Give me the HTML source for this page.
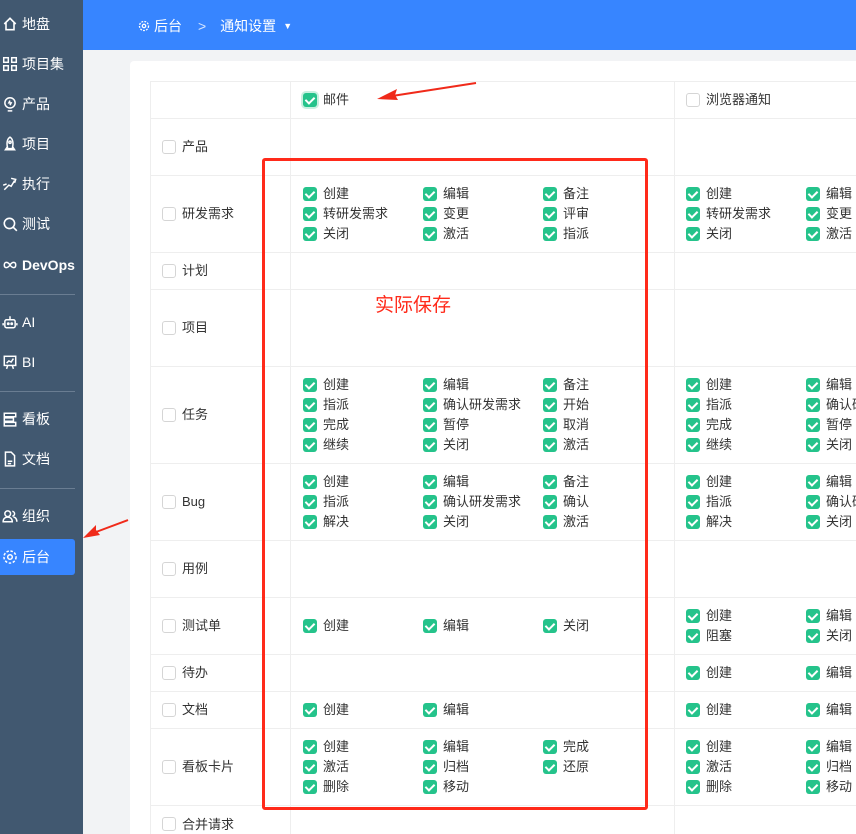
<!DOCTYPE html>
<html style="overflow:hidden;width:856px;height:834px"><head><meta charset="utf-8"><style>
*{box-sizing:border-box;margin:0;padding:0}
body{width:856px;height:834px;overflow:hidden;background:#f2f3f5;font-family:"Liberation Sans","Noto Sans CJK SC",sans-serif;font-size:13px;color:#333;position:relative}
#side{position:absolute;left:0;top:0;width:83px;height:834px;background:#415870;color:#fff;font-size:14px}
.si{position:absolute;left:0;height:36px;width:75px;display:flex;align-items:center;padding-left:2px;gap:4px}
.si svg{width:16px;height:16px;flex:none}
.hr{position:absolute;left:0;width:75px;height:1px;background:#6a7d92}
.act{background:#3785ff;border-radius:0 3px 3px 0}
#top{position:absolute;left:83px;top:0;right:0;height:50px;background:#3785ff;color:#fff;font-size:14px}
#card{position:absolute;left:130px;top:61px;width:726px;height:773px;background:#fff;border-radius:4px 0 0 0}
.row{position:absolute;left:150px;width:720px;border-top:1px solid #eee;display:flex}
.lab{width:141px;flex:none;border-left:1px solid #eee;border-right:1px solid #eee;display:flex;align-items:center;padding-left:11px;line-height:16px}
.col{width:384px;flex:none;border-right:1px solid #eee;display:flex;flex-direction:column;justify-content:center;padding-left:12px;overflow:hidden;white-space:nowrap}
.col2{width:195px;flex:none;display:flex;flex-direction:column;justify-content:center;padding-left:11px;overflow:hidden;white-space:nowrap}
.ln{height:20px;display:flex;align-items:center;line-height:16px}
.it{width:120px;flex:none;display:flex;align-items:center}
.c{width:14px;height:14px;border-radius:3px;background:#25c38b;position:relative;margin-right:6px;flex:none}
.c::after{content:"";position:absolute;left:4px;top:1.5px;width:4px;height:7px;border:solid #fff;border-width:0 2px 2px 0;transform:rotate(45deg)}
.e{width:14px;height:14px;border-radius:3px;border:1px solid #d5d5d5;background:#fff;margin-right:6px;flex:none}
</style></head><body>
<div id="side">
<div class="si" style="top:6px"><svg viewBox="0 0 14 14" fill="none" stroke="#fff" stroke-width="1.4"><path d="M2 7L7 2l5 5M3.5 6v6h7V6"/></svg>地盘</div>
<div class="si" style="top:46px"><svg viewBox="0 0 14 14" fill="none" stroke="#fff" stroke-width="1.3"><rect x="1.5" y="1.5" width="4" height="4"/><rect x="8.5" y="1.5" width="4" height="4"/><rect x="1.5" y="8.5" width="4" height="4"/><rect x="8.5" y="8.5" width="4" height="4"/></svg>项目集</div>
<div class="si" style="top:86px"><svg viewBox="0 0 14 14" fill="none" stroke="#fff" stroke-width="1.3"><circle cx="7" cy="6" r="4.5"/><path d="M5 13h4M7 4l-1 2h2l-1 2"/></svg>产品</div>
<div class="si" style="top:126px"><svg viewBox="0 0 14 14" fill="none" stroke="#fff" stroke-width="1.3"><path d="M7 1c3 2 3 6 2 10H5C4 7 4 3 7 1zM5 9l-2 3h8L9 9"/><circle cx="7" cy="5.5" r="1"/></svg>项目</div>
<div class="si" style="top:166px"><svg viewBox="0 0 14 14" fill="none" stroke="#fff" stroke-width="1.3"><path d="M2 12l4-4 2 1 3-5M1 8l3-1M8 2l4 1-1 3"/></svg>执行</div>
<div class="si" style="top:206px"><svg viewBox="0 0 14 14" fill="none" stroke="#fff" stroke-width="1.4"><circle cx="6.5" cy="6.5" r="4.5"/><path d="M10 10l3 3"/></svg>测试</div>
<div class="si" style="top:247px;font-weight:bold"><svg viewBox="0 0 14 14" fill="none" stroke="#fff" stroke-width="1.3"><path d="M7 7c-2-3-5-3-5 0s3 3 5 0 5-3 5 0-3 3-5 0"/></svg>DevOps</div>
<div class="hr" style="top:294px"></div>
<div class="si" style="top:304px"><svg viewBox="0 0 14 14" fill="none" stroke="#fff" stroke-width="1.3"><rect x="2.5" y="5" width="9" height="7" rx="1.5"/><path d="M7 5V2M1 8v2M13 8v2"/><circle cx="5.5" cy="8.5" r=".6"/><circle cx="8.5" cy="8.5" r=".6"/></svg>AI</div>
<div class="si" style="top:344px"><svg viewBox="0 0 14 14" fill="none" stroke="#fff" stroke-width="1.3"><rect x="2" y="2" width="10" height="8"/><path d="M4 8l2-2 2 1 2-3M5 10l-1 3M9 10l1 3"/></svg> BI</div>
<div class="hr" style="top:391px"></div>
<div class="si" style="top:401px"><svg viewBox="0 0 14 14" fill="none" stroke="#fff" stroke-width="1.3"><path d="M2 2h10v3H2zM2 6h8v3H2zM2 10h10v3H2z"/></svg>看板</div>
<div class="si" style="top:441px"><svg viewBox="0 0 14 14" fill="none" stroke="#fff" stroke-width="1.3"><path d="M3 1h5l3 3v9H3zM5 9h4M5 11h3"/></svg>文档</div>
<div class="hr" style="top:488px"></div>
<div class="si" style="top:498px"><svg viewBox="0 0 14 14" fill="none" stroke="#fff" stroke-width="1.3"><circle cx="5" cy="5" r="2.5"/><path d="M1 12c0-3 2-4 4-4s4 1 4 4zM9 3a2 2 0 010 4M10 8c2 0 3 2 3 4"/></svg>组织</div>
<div class="si act" style="top:539px"><svg viewBox="0 0 14 14" fill="none" stroke="#fff" stroke-width="1.3"><circle cx="7" cy="7" r="2"/><circle cx="7" cy="7" r="5.3" stroke-dasharray="2.2 1.4"/></svg>后台</div>
</div>
<div id="top">
<div style="position:absolute;left:55px;top:16px;display:flex;align-items:center;gap:4px"><svg width="12" height="12" viewBox="0 0 14 14" fill="none" stroke="#fff" stroke-width="1.5"><circle cx="7" cy="7" r="2"/><circle cx="7" cy="7" r="5.3" stroke-dasharray="2.2 1.4"/></svg>后台<span style="margin:0 10px 0 12px;opacity:.8">&gt;</span>通知设置<span style="font-size:9px;margin-left:3px">▼</span></div>
</div>
<div id="card"></div>

<div class="row" style="top:81px;height:37px"><div class="lab"></div><div class="col"><div class="ln"><div class="c" style="box-shadow:0 0 0 2px #c8f0e0"></div>邮件</div></div><div class="col2"><div class="ln"><div class="e"></div>浏览器通知</div></div></div>
<div class="row" style="top:118px;height:57px"><div class="lab"><div class="e"></div>产品</div><div class="col"></div><div class="col2"></div></div>
<div class="row" style="top:175px;height:77px"><div class="lab"><div class="e"></div>研发需求</div>
<div class="col"><div class="ln"><span class="it"><i class="c"></i>创建</span><span class="it"><i class="c"></i>编辑</span><span class="it"><i class="c"></i>备注</span></div><div class="ln"><span class="it"><i class="c"></i>转研发需求</span><span class="it"><i class="c"></i>变更</span><span class="it"><i class="c"></i>评审</span></div><div class="ln"><span class="it"><i class="c"></i>关闭</span><span class="it"><i class="c"></i>激活</span><span class="it"><i class="c"></i>指派</span></div></div>
<div class="col2"><div class="ln"><span class="it"><i class="c"></i>创建</span><span class="it"><i class="c"></i>编辑</span></div><div class="ln"><span class="it"><i class="c"></i>转研发需求</span><span class="it"><i class="c"></i>变更</span></div><div class="ln"><span class="it"><i class="c"></i>关闭</span><span class="it"><i class="c"></i>激活</span></div></div></div>
<div class="row" style="top:252px;height:37px"><div class="lab"><div class="e"></div>计划</div><div class="col"></div><div class="col2"></div></div>
<div class="row" style="top:289px;height:77px"><div class="lab"><div class="e"></div>项目</div><div class="col"></div><div class="col2"></div></div>
<div class="row" style="top:366px;height:97px"><div class="lab"><div class="e"></div>任务</div>
<div class="col"><div class="ln"><span class="it"><i class="c"></i>创建</span><span class="it"><i class="c"></i>编辑</span><span class="it"><i class="c"></i>备注</span></div><div class="ln"><span class="it"><i class="c"></i>指派</span><span class="it"><i class="c"></i>确认研发需求</span><span class="it"><i class="c"></i>开始</span></div><div class="ln"><span class="it"><i class="c"></i>完成</span><span class="it"><i class="c"></i>暂停</span><span class="it"><i class="c"></i>取消</span></div><div class="ln"><span class="it"><i class="c"></i>继续</span><span class="it"><i class="c"></i>关闭</span><span class="it"><i class="c"></i>激活</span></div></div>
<div class="col2"><div class="ln"><span class="it"><i class="c"></i>创建</span><span class="it"><i class="c"></i>编辑</span></div><div class="ln"><span class="it"><i class="c"></i>指派</span><span class="it"><i class="c"></i>确认研发需求</span></div><div class="ln"><span class="it"><i class="c"></i>完成</span><span class="it"><i class="c"></i>暂停</span></div><div class="ln"><span class="it"><i class="c"></i>继续</span><span class="it"><i class="c"></i>关闭</span></div></div></div>
<div class="row" style="top:463px;height:77px"><div class="lab"><div class="e"></div>Bug</div>
<div class="col"><div class="ln"><span class="it"><i class="c"></i>创建</span><span class="it"><i class="c"></i>编辑</span><span class="it"><i class="c"></i>备注</span></div><div class="ln"><span class="it"><i class="c"></i>指派</span><span class="it"><i class="c"></i>确认研发需求</span><span class="it"><i class="c"></i>确认</span></div><div class="ln"><span class="it"><i class="c"></i>解决</span><span class="it"><i class="c"></i>关闭</span><span class="it"><i class="c"></i>激活</span></div></div>
<div class="col2"><div class="ln"><span class="it"><i class="c"></i>创建</span><span class="it"><i class="c"></i>编辑</span></div><div class="ln"><span class="it"><i class="c"></i>指派</span><span class="it"><i class="c"></i>确认研发需求</span></div><div class="ln"><span class="it"><i class="c"></i>解决</span><span class="it"><i class="c"></i>关闭</span></div></div></div>
<div class="row" style="top:540px;height:57px"><div class="lab"><div class="e"></div>用例</div><div class="col"></div><div class="col2"></div></div>
<div class="row" style="top:597px;height:57px"><div class="lab"><div class="e"></div>测试单</div>
<div class="col"><div class="ln"><span class="it"><i class="c"></i>创建</span><span class="it"><i class="c"></i>编辑</span><span class="it"><i class="c"></i>关闭</span></div></div>
<div class="col2"><div class="ln"><span class="it"><i class="c"></i>创建</span><span class="it"><i class="c"></i>编辑</span></div><div class="ln"><span class="it"><i class="c"></i>阻塞</span><span class="it"><i class="c"></i>关闭</span></div></div></div>
<div class="row" style="top:654px;height:37px"><div class="lab"><div class="e"></div>待办</div><div class="col"></div>
<div class="col2"><div class="ln"><span class="it"><i class="c"></i>创建</span><span class="it"><i class="c"></i>编辑</span></div></div></div>
<div class="row" style="top:691px;height:37px"><div class="lab"><div class="e"></div>文档</div>
<div class="col"><div class="ln"><span class="it"><i class="c"></i>创建</span><span class="it"><i class="c"></i>编辑</span></div></div>
<div class="col2"><div class="ln"><span class="it"><i class="c"></i>创建</span><span class="it"><i class="c"></i>编辑</span></div></div></div>
<div class="row" style="top:728px;height:77px"><div class="lab"><div class="e"></div>看板卡片</div>
<div class="col"><div class="ln"><span class="it"><i class="c"></i>创建</span><span class="it"><i class="c"></i>编辑</span><span class="it"><i class="c"></i>完成</span></div><div class="ln"><span class="it"><i class="c"></i>激活</span><span class="it"><i class="c"></i>归档</span><span class="it"><i class="c"></i>还原</span></div><div class="ln"><span class="it"><i class="c"></i>删除</span><span class="it"><i class="c"></i>移动</span></div></div>
<div class="col2"><div class="ln"><span class="it"><i class="c"></i>创建</span><span class="it"><i class="c"></i>编辑</span></div><div class="ln"><span class="it"><i class="c"></i>激活</span><span class="it"><i class="c"></i>归档</span></div><div class="ln"><span class="it"><i class="c"></i>删除</span><span class="it"><i class="c"></i>移动</span></div></div></div>
<div class="row" style="top:805px;height:29px"><div class="lab" style="align-items:flex-start;padding-top:11px"><div class="e"></div>合并请求</div><div class="col"></div><div class="col2"></div></div>

<div style="position:absolute;left:262px;top:158px;width:386px;height:652px;border:3px solid #ff2a1a;border-radius:3px"></div>
<div style="position:absolute;left:375px;top:290px;color:#ff2a1a;font-size:19px">实际保存</div>
<svg style="position:absolute;left:0;top:0" width="856" height="834"><path d="M476 83L392 96" stroke="#f02a1a" stroke-width="2"/><path d="M377 99l20-10-2 6 3 5z" fill="#f02a1a"/><path d="M128 520L96 532" stroke="#f02a1a" stroke-width="2"/><path d="M83 538l13-13v5l4 5z" fill="#f02a1a"/></svg>
</body></html>
